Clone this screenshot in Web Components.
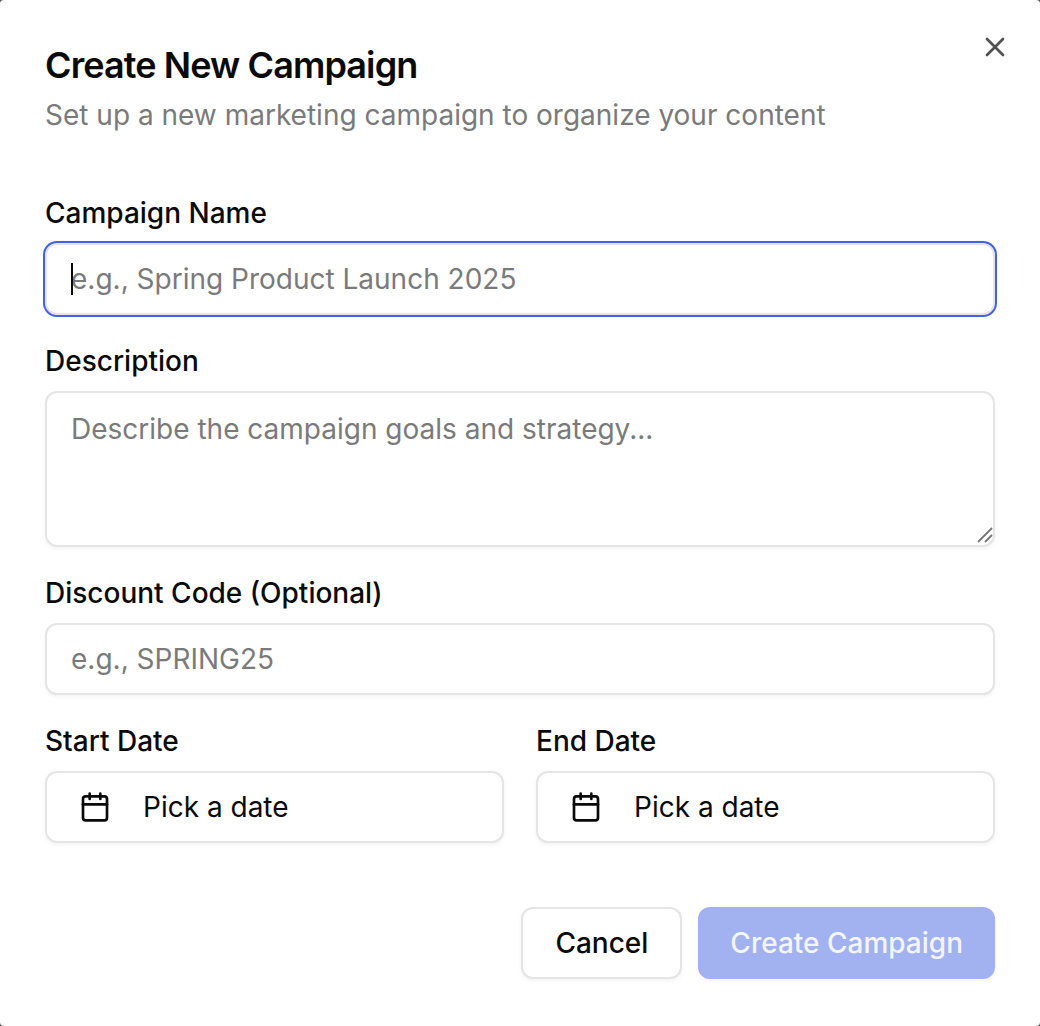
<!DOCTYPE html>
<html>
<head>
<meta charset="utf-8">
<style>
  html, body { margin: 0; padding: 0; background: #5a5a5a; }
  body { font-family: Inter, "Liberation Sans", sans-serif; color: #0a0a0a; }
</style>
</head>
<body>
<campaign-dialog>
  <span slot="title">Create New Campaign</span>
  <span slot="subtitle">Set up a new marketing campaign to organize your content</span>

  <form-field label="Campaign Name">
    <text-box placeholder="e.g., Spring Product Launch 2025" focused></text-box>
  </form-field>
  <form-field label="Description">
    <text-box placeholder="Describe the campaign goals and strategy..." multiline></text-box>
  </form-field>
  <form-field label="Discount Code (Optional)">
    <text-box placeholder="e.g., SPRING25"></text-box>
  </form-field>
  <date-row>
    <form-field label="Start Date"><date-button></date-button></form-field>
    <form-field label="End Date"><date-button></date-button></form-field>
  </date-row>

  <action-button slot="actions">Cancel</action-button>
  <action-button slot="actions" primary>Create Campaign</action-button>
</campaign-dialog>

<script>
class campaignDialog extends HTMLElement {
    constructor(){
        super();
        this.attachShadow({mode: "open"});
    }

    connectedCallback(){
        this.shadowRoot.innerHTML = `
            <style>
                :host{
                    display: flex;
                    flex-direction: column;
                    position: relative;
                    box-sizing: border-box;
                    width: 1040px;
                    height: 1026px;
                    padding: 47px 45px;
                    background: #fff;
                    border-radius: 4px;
                }
                h2{
                    margin: 0;
                    font-size: 36px;
                    line-height: 36px;
                    font-weight: 600;
                    letter-spacing: -0.9px;
                    color: #0a0a0a;
                }
                p{
                    margin: 12px 0 0;
                    font-size: 28px;
                    line-height: 40px;
                    color: #7a7a7a;
                }
                .form{
                    display: flex;
                    flex-direction: column;
                    gap: 32px;
                    margin-top: 64px;
                }
                .actions{
                    display: flex;
                    justify-content: flex-end;
                    gap: 16px;
                    margin-top: 64px;
                }
                .close{
                    position: absolute;
                    top: 31px;
                    right: 29px;
                    width: 32px;
                    height: 32px;
                    color: #0a0a0a;
                    opacity: .7;
                }
                .close svg{ display: block; }
            </style>
            <h2><slot name="title"></slot></h2>
            <p><slot name="subtitle"></slot></p>
            <div class="form"><slot></slot></div>
            <div class="actions"><slot name="actions"></slot></div>
            <div class="close">
                <svg width="32" height="32" viewBox="0 0 24 24" fill="none" stroke="currentColor" stroke-width="2" stroke-linecap="round" stroke-linejoin="round">
                    <path d="M18 6 6 18"/><path d="m6 6 12 12"/>
                </svg>
            </div>
        `;
    }
}

class formField extends HTMLElement {
    constructor(){
        super();
        this.attachShadow({mode: "open"});
    }

    connectedCallback(){
        this.shadowRoot.innerHTML = `
            <style>
                :host{
                    display: flex;
                    flex-direction: column;
                    gap: 16px;
                    min-width: 0;
                }
                label{
                    font-size: 28px;
                    line-height: 28px;
                    font-weight: 500;
                    color: #0a0a0a;
                }
            </style>
            <label>${this.getAttribute("label")}</label>
            <slot></slot>
        `;
    }
}

class textBox extends HTMLElement {
    constructor(){
        super();
        this.attachShadow({mode: "open"});
    }

    connectedCallback(){
        const focused = this.hasAttribute("focused");
        const multiline = this.hasAttribute("multiline");
        this.shadowRoot.innerHTML = `
            <style>
                :host{
                    display: block;
                    position: relative;
                    box-sizing: border-box;
                    height: ${multiline ? 156 : 72}px;
                    padding: ${multiline ? "16px" : "14px"} 24px;
                    border: 2px solid #e5e5e5;
                    border-radius: 12px;
                    background: #fff;
                    box-shadow: 0 2px 4px rgba(0,0,0,.05);
                    font-size: 28px;
                    line-height: 40px;
                    color: #7a7a7a;
                    white-space: nowrap;
                }
                :host([focused]){
                    box-shadow: 0 0 0 2px #4361e6;
                }
                .caret{
                    position: absolute;
                    left: 24px;
                    top: 18px;
                    width: 2px;
                    height: 32px;
                    background: #0a0a0a;
                }
                svg{
                    position: absolute;
                    right: 0;
                    bottom: 2px;
                }
            </style>
            ${focused ? '<span class="caret"></span>' : ""}
            ${this.getAttribute("placeholder")}
            ${multiline ? `<svg width="16" height="16" viewBox="0 0 16 16" fill="none" stroke="#737373" stroke-width="1.8"><path d="M1 15 15 1"/><path d="M8 15 15 8"/></svg>` : ""}
        `;
    }
}

class dateRow extends HTMLElement {
    constructor(){
        super();
        this.attachShadow({mode: "open"});
    }

    connectedCallback(){
        this.shadowRoot.innerHTML = `
            <style>
                :host{
                    display: grid;
                    grid-template-columns: 1fr 1fr;
                    gap: 32px;
                }
            </style>
            <slot></slot>
        `;
    }
}

class dateButton extends HTMLElement {
    constructor(){
        super();
        this.attachShadow({mode: "open"});
    }

    connectedCallback(){
        this.shadowRoot.innerHTML = `
            <style>
                :host{
                    display: flex;
                    align-items: center;
                    gap: 32px;
                    box-sizing: border-box;
                    height: 72px;
                    padding: 0 32px;
                    border: 2px solid #e5e5e5;
                    border-radius: 12px;
                    background: #fff;
                    box-shadow: 0 2px 4px rgba(0,0,0,.05);
                    font-size: 28px;
                    font-weight: 400;
                    color: #0a0a0a;
                }
                svg{ flex: none; }
            </style>
            <svg width="32" height="32" viewBox="0 0 24 24" fill="none" stroke="currentColor" stroke-width="2" stroke-linecap="round" stroke-linejoin="round">
                <path d="M8 2v4"/><path d="M16 2v4"/><rect width="18" height="18" x="3" y="4" rx="2"/><path d="M3 10h18"/>
            </svg>
            <span>Pick a date</span>
        `;
    }
}

class actionButton extends HTMLElement {
    constructor(){
        super();
        this.attachShadow({mode: "open"});
    }

    connectedCallback(){
        this.shadowRoot.innerHTML = `
            <style>
                :host{
                    display: flex;
                    align-items: center;
                    box-sizing: border-box;
                    height: 72px;
                    padding: 0 32px;
                    border: 2px solid #e5e5e5;
                    border-radius: 12px;
                    background: #fff;
                    box-shadow: 0 2px 4px rgba(0,0,0,.05);
                    font-size: 28px;
                    font-weight: 500;
                    color: #0a0a0a;
                }
                :host([primary]){
                    border: 0;
                    background: #a2b1f0;
                    color: #f3f5fd;
                }
            </style>
            <slot></slot>
        `;
    }
}

customElements.define("campaign-dialog", campaignDialog);
customElements.define("form-field", formField);
customElements.define("text-box", textBox);
customElements.define("date-row", dateRow);
customElements.define("date-button", dateButton);
customElements.define("action-button", actionButton);
</script>
</body>
</html>
